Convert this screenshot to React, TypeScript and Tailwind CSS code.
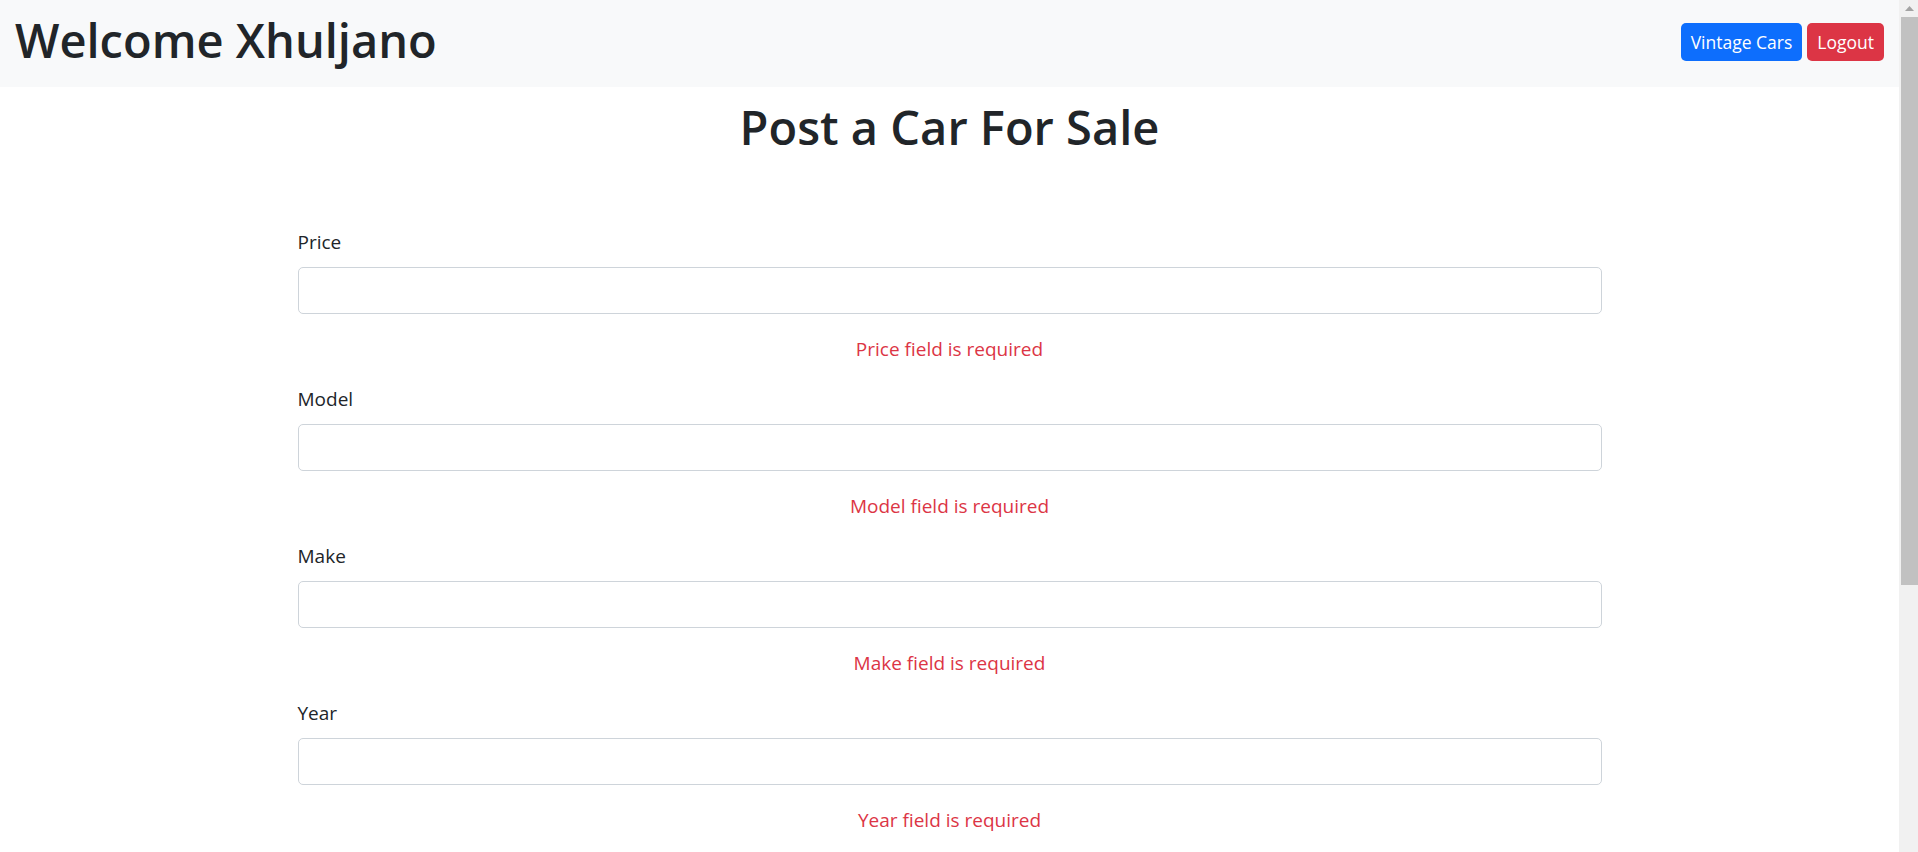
const fields = ["Price", "Model", "Make", "Year"];

function FakeScrollbar() {
  return (
    <div className="flex w-[19px] shrink-0 flex-col bg-[#f1f1f1]">
      <div className="flex h-[17px] items-center justify-center pl-[2px]">
        <svg width="9" height="5" viewBox="0 0 9 5">
          <polygon points="4.5,0 9,5 0,5" fill="#a3a3a3" />
        </svg>
      </div>
      <div className="ml-[2px] h-[568px] bg-[#c1c1c1]" />
    </div>
  );
}

export default function App() {
  return (
    <div
      className="flex h-[852px] w-full overflow-hidden bg-white text-[#212529]"
      style={{ fontFamily: '"Open Sans", "Noto Sans", sans-serif' }}
    >
      <div className="flex-1">
        <header className="flex h-[87px] items-start justify-between bg-[#f8f9fa] px-[15px]">
          <h1 className="mt-[10px] text-[47px] font-semibold leading-[60px]">Welcome Xhuljano</h1>
          <div className="mt-[23px] flex gap-[5px]">
            <button className="h-[38px] rounded-[5px] bg-[#0d6efd] px-[10px] text-[17.5px] text-white">
              Vintage Cars
            </button>
            <button className="h-[38px] rounded-[5px] bg-[#dc3545] px-[10px] text-[17.5px] text-white">
              Logout
            </button>
          </div>
        </header>

        <h1 className="mt-[10px] text-center text-[47px] font-semibold leading-[60px]">Post a Car For Sale</h1>

        <form className="mx-auto mt-[70px] w-[1304px]">
          {fields.map((f) => (
            <div key={f} className="mb-[20px]">
              <label className="mb-[10px] block text-[19px] leading-[30px]">{f}</label>
              <input
                type="text"
                className="block h-[47px] w-full rounded-[5px] border border-[#ced4da] bg-white px-[15px] text-[19px] outline-none"
              />
              <div className="mt-[20px] text-center text-[19px] leading-[30px] text-[#dc3545]">
                {f} field is required
              </div>
            </div>
          ))}
        </form>
      </div>
      <FakeScrollbar />
    </div>
  );
}
